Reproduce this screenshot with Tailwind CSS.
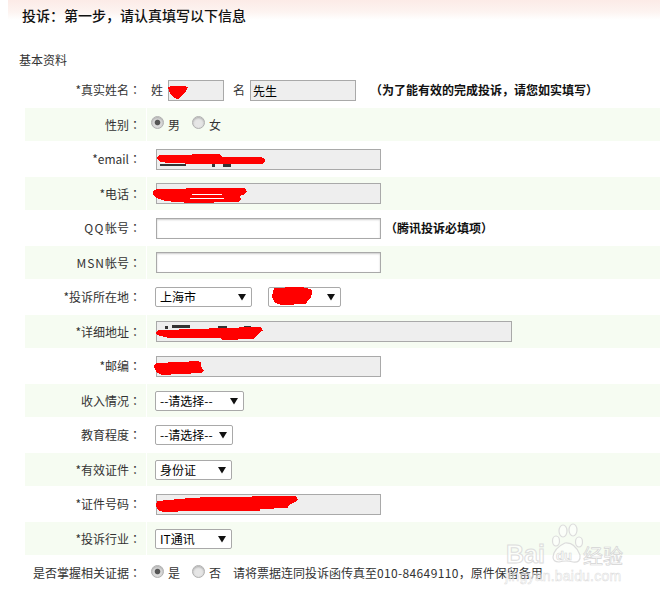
<!DOCTYPE html>
<html lang="zh-CN">
<head>
<meta charset="utf-8">
<title>投诉</title>
<script src="https://cdn.jsdelivr.net/npm/@tailwindcss/browser@4"></script>
</head>
<body class="bg-white font-['Noto_Sans_CJK_SC','Noto_Sans',sans-serif] text-[12px] text-[#333]">
<div class="relative w-[660px] h-[597px] overflow-hidden">
  <div class="ml-[8px] h-[30px] pl-[14px] bg-linear-to-b from-[#fcebe7] via-[#fdf4f1] via-[40%] to-white to-[66%] text-[14px] leading-[30px] font-medium text-[#111]">投诉<span class="font-['Noto_Sans_CJK_TC']">&#xFF1A;</span>第一步<span class="font-['Noto_Sans_CJK_TC']">&#xFF0C;</span>请认真填写以下信息</div>
  <div class="h-[42px] pl-[19px] pt-[18px] leading-[24px]">基本资料</div>

  <div class="ml-[25px]">
    <div class="grid grid-cols-[121px_1fr] gap-px h-[36px]">
      <div class="flex items-center justify-end pr-[5px]">*真实姓名<span class="font-['Noto_Sans_CJK_TC']">&#xFF1A;</span></div>
      <div class="flex items-center pl-[4px]">
        <span>姓</span>
        <input readonly class="ml-[5px] w-[56px] h-[21px] border border-[#a9a9a9] bg-[#eeeeee] px-[2px] text-black">
        <span class="ml-[9px]">名</span>
        <input readonly value="先生" class="ml-[5px] w-[106px] h-[21px] border border-[#a9a9a9] bg-[#eeeeee] px-[2px] text-black">
        <span class="ml-[14px] whitespace-nowrap font-semibold text-[#111]"><span class="font-['Noto_Sans_CJK_TC']">&#xFF08;</span>为了能有效的完成投诉<span class="font-['Noto_Sans_CJK_TC']">&#xFF0C;</span>请您如实填写<span class="font-['Noto_Sans_CJK_TC']">&#xFF09;</span></span>
      </div>
    </div>

    <div class="grid grid-cols-[121px_1fr] gap-px h-[33px]">
      <div class="flex items-center justify-end pr-[5px] bg-[#f6fcf2]">性别<span class="font-['Noto_Sans_CJK_TC']">&#xFF1A;</span></div>
      <div class="flex items-center pl-[4px] bg-[#f6fcf2]">
        <input type="radio" name="g" checked class="appearance-none size-[13px] -mt-[5px] rounded-full border border-[#b0b0b0] bg-[#e6e6e6] shadow-[inset_0_1px_2px_#aaa] checked:bg-[radial-gradient(circle,#555_0,#555_30%,#dcdcdc_42%)]">
        <span class="ml-[4px]">男</span>
        <input type="radio" name="g" class="appearance-none ml-[12px] size-[13px] -mt-[5px] rounded-full border border-[#b0b0b0] bg-[#e6e6e6] shadow-[inset_0_1px_2px_#aaa]">
        <span class="ml-[4px]">女</span>
      </div>
    </div>

    <div class="grid grid-cols-[121px_1fr] gap-px h-[36px]">
      <div class="flex items-center justify-end pr-[5px]"><span>*email</span><span class="font-['Noto_Sans_CJK_TC']">&#xFF1A;</span></div>
      <div class="flex items-center pl-[9px]"><input readonly class="w-[225px] h-[21px] border border-[#a9a9a9] bg-[#eeeeee]"></div>
    </div>

    <div class="grid grid-cols-[121px_1fr] gap-px h-[33px]">
      <div class="flex items-center justify-end pr-[5px] bg-[#f6fcf2]">*电话<span class="font-['Noto_Sans_CJK_TC']">&#xFF1A;</span></div>
      <div class="flex items-center pl-[9px] bg-[#f6fcf2]"><input readonly class="w-[225px] h-[21px] border border-[#a9a9a9] bg-[#eeeeee]"></div>
    </div>

    <div class="grid grid-cols-[121px_1fr] gap-px h-[36px]">
      <div class="flex items-center justify-end pr-[5px]"><span class="tracking-[1.5px]">QQ</span>帐号<span class="font-['Noto_Sans_CJK_TC']">&#xFF1A;</span></div>
      <div class="flex items-center pl-[9px]">
        <input class="w-[225px] h-[21px] border border-[#a9a9a9] bg-white shadow-[inset_0_1px_2px_#ccc]">
        <span class="ml-[4px] whitespace-nowrap font-semibold text-[#111]"><span class="font-['Noto_Sans_CJK_TC']">&#xFF08;</span>腾讯投诉必填项<span class="font-['Noto_Sans_CJK_TC']">&#xFF09;</span></span>
      </div>
    </div>

    <div class="grid grid-cols-[121px_1fr] gap-px h-[33px]">
      <div class="flex items-center justify-end pr-[5px] bg-[#f6fcf2]"><span class="tracking-[1px]">MSN</span>帐号<span class="font-['Noto_Sans_CJK_TC']">&#xFF1A;</span></div>
      <div class="flex items-center pl-[9px] bg-[#f6fcf2]"><input class="w-[225px] h-[21px] border border-[#a9a9a9] bg-white shadow-[inset_0_1px_2px_#ccc]"></div>
    </div>

    <div class="grid grid-cols-[121px_1fr] gap-px h-[36px]">
      <div class="flex items-center justify-end pr-[5px]">*投诉所在地<span class="font-['Noto_Sans_CJK_TC']">&#xFF1A;</span></div>
      <div class="flex items-center pl-[8px]">
        <div class="relative w-[97px] h-[20px] -mt-px">
          <select class="appearance-none w-full h-full border border-[#a9a9a9] rounded-[2px] bg-white pl-[4px] text-black"><option>上海市</option></select>
          <svg class="absolute right-[6px] top-[6px] pointer-events-none" width="8" height="8" viewBox="0 0 8 8"><path d="M0 1H8L4 7.5Z" fill="#111"/></svg>
        </div>
        <div class="relative ml-[16px] w-[73px] h-[20px] -mt-px">
          <select class="appearance-none w-full h-full border border-[#a9a9a9] rounded-[2px] bg-white pl-[4px] text-black"><option></option></select>
          <svg class="absolute right-[6px] top-[6px] pointer-events-none" width="8" height="8" viewBox="0 0 8 8"><path d="M0 1H8L4 7.5Z" fill="#111"/></svg>
        </div>
      </div>
    </div>

    <div class="grid grid-cols-[121px_1fr] gap-px h-[33px]">
      <div class="flex items-center justify-end pr-[5px] bg-[#f6fcf2]">*详细地址<span class="font-['Noto_Sans_CJK_TC']">&#xFF1A;</span></div>
      <div class="flex items-center pl-[9px] bg-[#f6fcf2]"><input readonly class="w-[356px] h-[21px] border border-[#a9a9a9] bg-[#eeeeee]"></div>
    </div>

    <div class="grid grid-cols-[121px_1fr] gap-px h-[36px]">
      <div class="flex items-center justify-end pr-[5px]">*邮编<span class="font-['Noto_Sans_CJK_TC']">&#xFF1A;</span></div>
      <div class="flex items-center pl-[9px]"><input readonly class="w-[225px] h-[21px] border border-[#a9a9a9] bg-[#eeeeee]"></div>
    </div>

    <div class="grid grid-cols-[121px_1fr] gap-px h-[33px]">
      <div class="flex items-center justify-end pr-[5px] bg-[#f6fcf2]">收入情况<span class="font-['Noto_Sans_CJK_TC']">&#xFF1A;</span></div>
      <div class="flex items-center pl-[8px] bg-[#f6fcf2]">
        <div class="relative w-[89px] h-[20px]">
          <select class="appearance-none w-full h-full border border-[#a9a9a9] rounded-[2px] bg-white pl-[4px] text-black"><option>--请选择--</option></select>
          <svg class="absolute right-[6px] top-[6px] pointer-events-none" width="8" height="8" viewBox="0 0 8 8"><path d="M0 1H8L4 7.5Z" fill="#111"/></svg>
        </div>
      </div>
    </div>

    <div class="grid grid-cols-[121px_1fr] gap-px h-[36px]">
      <div class="flex items-center justify-end pr-[5px]">教育程度<span class="font-['Noto_Sans_CJK_TC']">&#xFF1A;</span></div>
      <div class="flex items-center pl-[8px]">
        <div class="relative w-[78px] h-[20px]">
          <select class="appearance-none w-full h-full border border-[#a9a9a9] rounded-[2px] bg-white pl-[4px] text-black"><option>--请选择--</option></select>
          <svg class="absolute right-[6px] top-[6px] pointer-events-none" width="8" height="8" viewBox="0 0 8 8"><path d="M0 1H8L4 7.5Z" fill="#111"/></svg>
        </div>
      </div>
    </div>

    <div class="grid grid-cols-[121px_1fr] gap-px h-[33px]">
      <div class="flex items-center justify-end pr-[5px] bg-[#f6fcf2]">*有效证件<span class="font-['Noto_Sans_CJK_TC']">&#xFF1A;</span></div>
      <div class="flex items-center pl-[8px] bg-[#f6fcf2]">
        <div class="relative w-[77px] h-[20px]">
          <select class="appearance-none w-full h-full border border-[#a9a9a9] rounded-[2px] bg-white pl-[4px] text-black"><option>身份证</option></select>
          <svg class="absolute right-[6px] top-[6px] pointer-events-none" width="8" height="8" viewBox="0 0 8 8"><path d="M0 1H8L4 7.5Z" fill="#111"/></svg>
        </div>
      </div>
    </div>

    <div class="grid grid-cols-[121px_1fr] gap-px h-[36px]">
      <div class="flex items-center justify-end pr-[5px]">*证件号码<span class="font-['Noto_Sans_CJK_TC']">&#xFF1A;</span></div>
      <div class="flex items-center pl-[9px]"><input readonly class="w-[225px] h-[21px] border border-[#a9a9a9] bg-[#eeeeee]"></div>
    </div>

    <div class="grid grid-cols-[121px_1fr] gap-px h-[33px]">
      <div class="flex items-center justify-end pr-[5px] bg-[#f6fcf2]">*投诉行业<span class="font-['Noto_Sans_CJK_TC']">&#xFF1A;</span></div>
      <div class="flex items-center pl-[8px] bg-[#f6fcf2]">
        <div class="relative w-[77px] h-[20px]">
          <select class="appearance-none w-full h-full border border-[#a9a9a9] rounded-[2px] bg-white pl-[4px] text-black"><option>IT通讯</option></select>
          <svg class="absolute right-[6px] top-[6px] pointer-events-none" width="8" height="8" viewBox="0 0 8 8"><path d="M0 1H8L4 7.5Z" fill="#111"/></svg>
        </div>
      </div>
    </div>

    <div class="grid grid-cols-[121px_1fr] gap-px h-[36px]">
      <div class="flex items-center justify-end pr-[5px] whitespace-nowrap">是否掌握相关证据<span class="font-['Noto_Sans_CJK_TC']">&#xFF1A;</span></div>
      <div class="flex items-center pl-[4px] whitespace-nowrap">
        <input type="radio" name="e" checked class="appearance-none size-[13px] -mt-[4px] rounded-full border border-[#b0b0b0] bg-[#e6e6e6] shadow-[inset_0_1px_2px_#aaa] checked:bg-[radial-gradient(circle,#555_0,#555_30%,#dcdcdc_42%)]">
        <span class="ml-[4px]">是</span>
        <input type="radio" name="e" class="appearance-none ml-[12px] size-[13px] -mt-[4px] rounded-full border border-[#b0b0b0] bg-[#e6e6e6] shadow-[inset_0_1px_2px_#aaa]">
        <span class="ml-[4px]">否</span>
        <span class="ml-[12px]">请将票据连同投诉函传真至<span class="tracking-[0.35px]">010-84649110</span><span class="font-['Noto_Sans_CJK_TC']">&#xFF0C;</span>原件保留备用</span>
      </div>
    </div>
  </div>

  <!-- hand-drawn redaction marks over the fields -->
  <svg class="absolute left-0 top-0 pointer-events-none" width="660" height="597" viewBox="0 0 660 597" shape-rendering="crispEdges">
    <g fill="#333">
      <rect x="160" y="164" width="26" height="1.5"/><rect x="212" y="164" width="3" height="3"/><rect x="223" y="164" width="8" height="3"/>
      <rect x="165" y="326" width="3" height="3"/><rect x="172" y="325" width="18" height="3"/><rect x="218" y="326" width="9" height="2"/><rect x="244" y="326" width="7" height="2"/>
    </g>
    <g fill="#f00">
      <path d="M168 87Q178 84 188 87L186 91Q183 96 178 99Q172 98 170 93Z"/>
      <path d="M157 158Q158 154 165 155L218 154Q222 155 222 157L262 157.5Q268 160 262 164L200 164L170 163L160 162Z"/>
      <path d="M153 191Q156 188 165 189L185 189.5L187 188L244 188Q249 191 245 194L240 196L241 200L238 202L190 203L165 201L157 198Q151 195 153 191Z"/>
      <path d="M274 288L296 287Q310 287 312 291Q312 298 308 300L306 304L282 305Q273 304 272 296Z"/>
      <path d="M158 330L200 329L218 328L260 327Q264 330 262 331L256 336L254 339L222 340L221 338L170 338Q157 336 156 333Z"/>
      <path d="M156 363L180 362L198 361Q202 362 201 366L204 371L201 373L180 374L162 375Q155 373 154 366Z"/>
      <path d="M157 501L190 498L210 497L295 496Q299 498 297 501L289 505L288 508L260 509L260 511L178 511L177 512L163 512Q156 510 156 505Z"/>
    </g>
    <g fill="#fff">
      <rect x="192" y="194" width="30" height="1"/><rect x="190" y="198" width="34" height="1"/>
    </g>
  </svg>

  <!-- watermark -->
  <div class="absolute left-[505px] top-[522px] w-[125px] h-[62px] pointer-events-none">
    <svg class="absolute left-[46px] top-0" width="32" height="42" viewBox="0 0 32 42" fill="#ffffff" fill-opacity="0.55" stroke="#dcdcdc" stroke-width="1.2">
      <ellipse cx="5" cy="19" rx="3.5" ry="5"/>
      <ellipse cx="12" cy="9" rx="4" ry="6"/>
      <ellipse cx="22" cy="8" rx="4" ry="6"/>
      <ellipse cx="28" cy="20" rx="3.5" ry="5"/>
      <path d="M2 35Q3 26 14 21Q24 20 29 33Q30 41 22 40Q15 38 8 40Q2 40 2 35Z"/>
    </svg>
    <span class="absolute left-[1px] top-[19px] font-['Liberation_Sans',sans-serif] font-bold text-[25px] leading-[26px] text-white/60 [-webkit-text-stroke:1px_#dddddd]">Bai</span>
    <span class="absolute left-[51px] top-[27px] font-['Liberation_Sans',sans-serif] font-bold text-[13px] leading-[14px] text-white/60 [-webkit-text-stroke:0.6px_#d4d4d4]">du</span>
    <span class="absolute left-[78px] top-[24px] text-[20px] leading-[20px] text-white/60 [-webkit-text-stroke:0.7px_#d4d4d4]">经验</span>
    <span class="absolute left-0 top-[47px] font-['Liberation_Sans',sans-serif] text-[14px] leading-[15px] tracking-[0.2px] text-white/40 [-webkit-text-stroke:0.5px_#dcdcdc] whitespace-nowrap">jingyan.baidu.com</span>
  </div>
</div>
</body>
</html>
